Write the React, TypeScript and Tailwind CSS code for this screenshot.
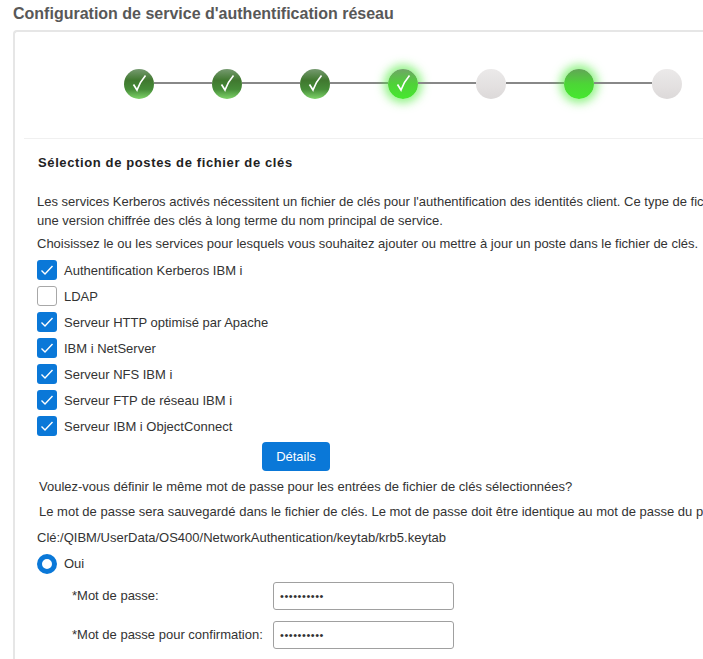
import React from "react";

const Check = () => (
  <svg width="18" height="20" viewBox="0 0 18 20" fill="none" className="block">
    <path d="M3.5 10.5 L7 16 C9 10.5 12 5.5 15.5 1.5" stroke="#fff" strokeWidth="1.7" />
  </svg>
);

type StepKind = "done" | "doneActive" | "idle" | "active";

const Step = ({ kind }: { kind: StepKind }) => {
  const cls =
    kind === "done"
      ? "bg-[linear-gradient(180deg,#769a70_0%,#40782f_38%,#468c38_68%,#7fd46a_100%)]"
      : kind === "doneActive"
        ? "bg-[linear-gradient(180deg,#6fa566_0%,#4fd238_50%,#46e82f_100%)] shadow-[0_0_10px_4px_rgba(70,235,50,0.6)]"
        : kind === "active"
          ? "bg-[linear-gradient(180deg,#62a556_0%,#4cd636_50%,#46e82f_100%)] shadow-[0_0_10px_4px_rgba(70,235,50,0.6)]"
          : "bg-[linear-gradient(180deg,#ebe9e9_0%,#e3e0e0_60%,#dcd9d9_100%)]";
  return (
    <div className={`w-[30px] h-[30px] rounded-full shrink-0 flex items-center justify-center ${cls}`}>
      {(kind === "done" || kind === "doneActive") && <Check />}
    </div>
  );
};

const Connector = () => <div className="w-[58px] h-[2px] mt-[13px] bg-[#888888] shrink-0" />;

const BoxCheck = ({ checked, label }: { checked: boolean; label: string }) => (
  <div className="flex items-center h-[26px] gap-[7px]">
    {checked ? (
      <div className="w-[20px] h-[20px] rounded-[3px] bg-[#0a78d8] flex items-center justify-center shrink-0">
        <svg width="14" height="12" viewBox="0 0 14 12" fill="none">
          <path d="M1.5 6.5 L5 10 L12.5 2" stroke="#fff" strokeWidth="1.4" />
        </svg>
      </div>
    ) : (
      <div className="w-[20px] h-[20px] rounded-[3px] border border-[#a8a8a8] bg-white shrink-0" />
    )}
    <span className="mt-[1px]">{label}</span>
  </div>
);

const PasswordRow = ({ label }: { label: string }) => (
  <div className="flex items-center h-[28px]">
    <span className="w-[236px] pl-[35px] shrink-0">{label}</span>
    <div className="w-[181px] h-[28px] rounded-[3px] border border-[#a0a0a0] bg-white flex items-center pl-[6px] text-[#333] shrink-0">
      <span className="text-[11px] tracking-[0.55px] leading-none">••••••••••</span>
    </div>
  </div>
);

export default function App() {
  const services: [boolean, string][] = [
    [true, "Authentification Kerberos IBM i"],
    [false, "LDAP"],
    [true, "Serveur HTTP optimisé par Apache"],
    [true, "IBM i NetServer"],
    [true, "Serveur NFS IBM i"],
    [true, "Serveur FTP de réseau IBM i"],
    [true, "Serveur IBM i ObjectConnect"],
  ];
  return (
    <div className="w-[703px] h-[659px] overflow-hidden bg-white font-['Liberation_Sans',Arial,sans-serif] text-[13px] text-[#333333]">
      <h1 className="h-[30px] pl-[13px] pt-[3px] text-[16px] leading-[22px] font-bold text-[#585858] whitespace-nowrap">
        Configuration de service d'authentification réseau
      </h1>
      <div className="ml-[13px] w-[720px] h-[640px] border-2 border-[#e6e6e6] border-r-0 rounded-tl-[4px] pl-[9px]">
        <div className="h-[106px] pt-[37px] pl-[100px] flex items-start">
          <Step kind="done" />
          <Connector />
          <Step kind="done" />
          <Connector />
          <Step kind="done" />
          <Connector />
          <Step kind="doneActive" />
          <Connector />
          <Step kind="idle" />
          <Connector />
          <Step kind="active" />
          <Connector />
          <Step kind="idle" />
        </div>
        <div className="border-t border-[#f0f0f0] pl-[14px] pt-[16px] whitespace-nowrap">
          <h2 className="text-[13px] leading-[16px] font-bold text-[#222222] tracking-[0.62px] mb-[21px]">
            Sélection de postes de fichier de clés
          </h2>
          <p className="leading-[19px] -ml-[1px]">
            Les services Kerberos activés nécessitent un fichier de clés pour l'authentification des identités client. Ce type de fichier contient
          </p>
          <p className="leading-[19px] -ml-[1px] mb-[4px]">
            une version chiffrée des clés à long terme du nom principal de service.
          </p>
          <p className="leading-[19px] -ml-[1px] mb-[4px]">
            Choisissez le ou les services pour lesquels vous souhaitez ajouter ou mettre à jour un poste dans le fichier de clés.
          </p>
          <div className="-ml-[1px] flex flex-col">
            {services.map(([c, l]) => (
              <BoxCheck key={l} checked={c} label={l} />
            ))}
          </div>
          <button className="block ml-[224px] mt-[3px] w-[68px] h-[29px] rounded-[4px] bg-[#0a78d8] text-white text-[13px]">
            Détails
          </button>
          <p className="leading-[19px] mt-[6px] mb-[6px] ml-[1px]">
            Voulez-vous définir le même mot de passe pour les entrées de fichier de clés sélectionnées?
          </p>
          <p className="leading-[19px] mb-[7px] ml-[1px]">
            Le mot de passe sera sauvegardé dans le fichier de clés. Le mot de passe doit être identique au mot de passe du principal de service.
          </p>
          <p className="leading-[19px] -ml-[1px]">Clé:/QIBM/UserData/OS400/NetworkAuthentication/keytab/krb5.keytab</p>
          <div className="flex items-center h-[26px] gap-[7px] -ml-[1px] mt-[4px]">
            <div className="w-[20px] h-[20px] rounded-full border-[5px] border-[#0a78d8] bg-white shrink-0" />
            <span>Oui</span>
          </div>
          <div className="flex flex-col gap-[11px] mt-[5px] -ml-[1px]">
            <PasswordRow label="*Mot de passe:" />
            <PasswordRow label="*Mot de passe pour confirmation:" />
          </div>
        </div>
      </div>
    </div>
  );
}
